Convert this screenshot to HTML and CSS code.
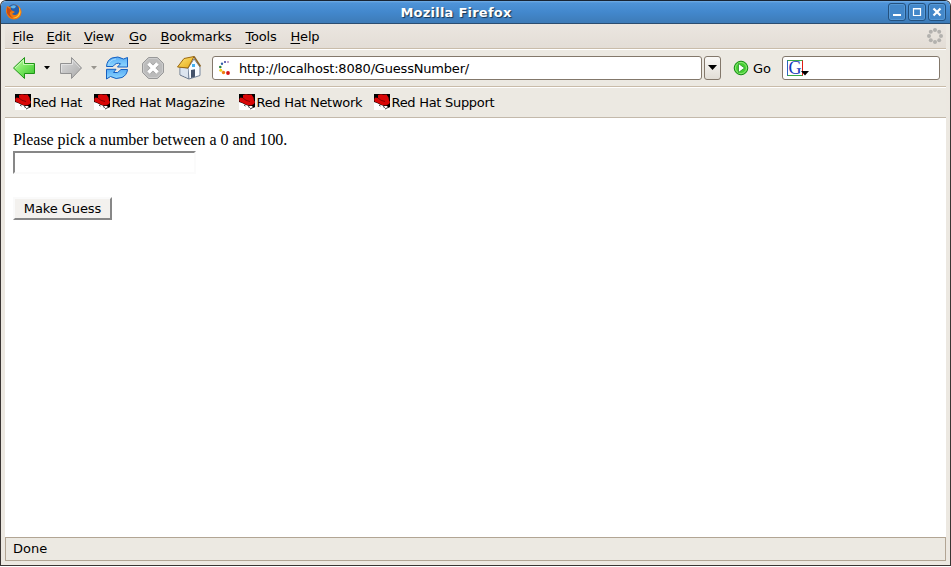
FILE: index.html
```html
<!DOCTYPE html>
<html lang="en">
<head>
<meta charset="utf-8">
<title>Mozilla Firefox</title>
<link rel="stylesheet" href="styles.css">
</head>
<body>
<svg class="defs" width="0" height="0" aria-hidden="true">
  <defs>
    <linearGradient id="green" x1="0" y1="0" x2="1" y2="1"><stop offset="0" stop-color="#c9ffb0"/><stop offset=".5" stop-color="#79e660"/><stop offset="1" stop-color="#35c22a"/></linearGradient>
    <linearGradient id="grey" x1="0" y1="0" x2="1" y2="1"><stop offset="0" stop-color="#dedede"/><stop offset="1" stop-color="#a9a9a9"/></linearGradient>
    <linearGradient id="blue" x1="0" y1="0" x2="0" y2="1"><stop offset="0" stop-color="#58acf5"/><stop offset="1" stop-color="#8fd8ff"/></linearGradient>
    <linearGradient id="roof" x1="0" y1="0" x2="1" y2="1"><stop offset="0" stop-color="#ffe77a"/><stop offset="1" stop-color="#e5a913"/></linearGradient>
    <symbol id="hat" viewBox="0 0 16 16">
      <rect width="16" height="16" fill="#fff"/>
      <path d="M0 0h16v13l-1.500 1-1.500-2-3 0-3-1-4-2-3-1z" fill="#000"/>
      <path d="M4 1l3-.8 2.500.6 3-.3 2 3 .5 3 1 1.500-1 2-3 1.500-4-.5-4-2-3.500-1.500-.3-2.500 1.300-1.500 2.500.5z" fill="#d80606"/>
      <path d="M4 4l3 2.300 4 1.200" fill="none" stroke="#720000" stroke-width=".8"/>
      <path d="M5 11l1.500 1M9 12.500l2 1M11 15l3-1.500" fill="none" stroke="#000" stroke-width=".8"/>
    </symbol>
  </defs>
</svg>
<div class="window">
  <header class="titlebar">
    <svg class="fox" width="18" height="18" viewBox="0 0 18 18">
      <circle cx="9" cy="9" r="7.600" fill="#ef7612"/>
      <circle cx="8.500" cy="7" r="5.800" fill="#245fae"/>
      <path d="M5 4q3-3 6-1l-1 2-2 .5z" fill="#64b7e8"/>
      <path d="M2 3q-2 5 0 8 3 5 8 5 6-1 6-7 0-3-2-5 1 5-1 7-3 2-6 0l3-2-4-2q-1-2 0-3-2 0-4-1z" fill="#ee7812"/>
      <path d="M14 4q3 5 0 9-3 3-6 2 5-1 6-5 1-2 0-6z" fill="#ffcf36"/>
      <path d="M2 4v6q2 4 6 5-4-3-3-6l2-1-2-2z" fill="#c84b13"/>
    </svg>
    <h1>Mozilla Firefox</h1>
    <div class="controls">
      <span><svg width="16" height="16"><path d="M4 11h8" stroke="#fff" stroke-width="2"/></svg></span>
      <span><svg width="16" height="16"><path d="M4.500 4.500h7v7h-7zM4 5h8" fill="none" stroke="#fff" stroke-width="1.200"/></svg></span>
      <span><svg width="16" height="16"><path d="M4.500 4.500l7 7M11.500 4.500l-7 7" stroke="#fff" stroke-width="2.200"/></svg></span>
    </div>
  </header>
  <div class="client">
    <nav class="menubar">
      <a class="m-file"><u>F</u>ile</a><a class="m-edit"><u>E</u>dit</a><a class="m-view"><u>V</u>iew</a><a class="m-go"><u>G</u>o</a><a class="m-book"><u>B</u>ookmarks</a><a class="m-tools"><u>T</u>ools</a><a><u>H</u>elp</a>
      <svg class="throbber" width="18" height="18" viewBox="0 0 18 18" fill="#b3b1ae"><circle cx="9" cy="3" r="2"/><circle cx="13.200" cy="4.800" r="2"/><circle cx="15" cy="9" r="2"/><circle cx="13.200" cy="13.200" r="2"/><circle cx="9" cy="15" r="2"/><circle cx="4.800" cy="13.200" r="2"/><circle cx="3" cy="9" r="2"/><circle cx="4.800" cy="4.800" r="2"/></svg>
    </nav>
    <div class="toolbar">
      <svg class="back" width="24" height="24" viewBox="0 0 24 24"><path d="M1.500 12L12.500 1.500V7.500H22.500V17.500H12.500V22.500z" fill="url(#green)" stroke="#1f9417"/><path d="M3 12l8.500-8v4.500h10" fill="none" stroke="#d8ffc9" opacity=".8"/></svg>
      <svg class="drop" width="6" height="4"><path d="M0 0h6L3 3.500z"/></svg>
      <svg class="forward" width="24" height="24" viewBox="0 0 24 24"><path d="M22.500 12L12.500 1.500V7.500H1.500V17.500H12.500V22.500z" fill="url(#grey)" stroke="#929292"/><path d="M2.500 16V8.500h11V4l7.500 8" fill="none" stroke="#e9e9e9" opacity=".7"/></svg>
      <svg class="drop2" width="6" height="4"><path d="M0 0h6L3 3.500z" fill="#99968f"/></svg>
      <svg class="reload" width="24" height="24" viewBox="0 0 24 24" fill="url(#blue)" stroke="#145fc0" stroke-linejoin="round">
        <path d="M1.500 10.500Q2 4 7 2q6-2.500 11.500 1l4-1.500v9.500h-10l3-3.300Q11 6 8 10.500z"/>
        <path d="M22.500 13.500Q22 19 17 21.500q-6 2.500-11.500-1l-4 2.500v-9.700h9.500l-2.500 3.200Q13 18 16 13.500z"/>
        <path d="M3.500 8.500Q5 3.500 11 3" fill="none" stroke="#a5dcff"/>
      </svg>
      <svg class="stop" width="24" height="24" viewBox="0 0 24 24"><path d="M7.500 1.500h9l6 6v9l-6 6h-9l-6-6v-9z" fill="#bbb" stroke="#989898"/><path d="M8 2.500h8l5.500 5.500v8L16 21.500H8L2.500 16V8z" fill="none" stroke="#ccc"/><path d="M8 8l8 8M16 8l-8 8" stroke="#9c9c9c" stroke-width="5"/><path d="M7.500 7.500l9 9M16.500 7.500l-9 9" stroke="#fff" stroke-width="3.600"/></svg>
      <svg class="home" width="26" height="26" viewBox="0 0 26 26"><path d="M4 12l9 1v11L4 20z" fill="#c8d0db" stroke="#65758b"/><path d="M12 13l6-9 6 8v8.500l-11 3.500z" fill="#f8fbff" stroke="#75859b"/><path d="M4.500 13l7.500 1v9l-7.500-3.500z" fill="#dce5ef"/><path d="M15 15l4-.7v7.500l-4 1.300z" fill="#44536a"/><rect x="16" y="9" width="3" height="3" fill="#45b0ef"/><path d="M1.500 12L8 3.500l10-2L12 13z" fill="url(#roof)" stroke="#9c6910"/><path d="M18 1.500l6.500 10" stroke="#8a6428" stroke-width="1.500"/></svg>
      <div class="address">
        <svg width="14" height="18" viewBox="0 0 14 18"><circle cx="10" cy="3" r=".8" fill="#7a3793"/><circle cx="7" cy="3" r="1.100" fill="#4547a5"/><circle cx="4" cy="4.800" r="1.200" fill="#3360a9"/><circle cx="2.300" cy="8" r="1.300" fill="#28833b"/><circle cx="2.800" cy="11.200" r="1.500" fill="#f1cd17"/><circle cx="5.500" cy="13.500" r="1.700" fill="#ef7b12"/><circle cx="10" cy="14" r="1.900" fill="#d41313"/></svg>
        <span>http://localhost:8080/GuessNumber/</span>
      </div>
      <div class="picker"><svg width="10" height="6"><path d="M0 0h9L4.500 5z"/></svg></div>
      <svg class="go" width="16" height="16" viewBox="0 0 16 16"><circle cx="8" cy="8" r="6.800" fill="#44ce31" stroke="#168b16"/><circle cx="8" cy="8" r="5.500" fill="none" stroke="#8fe978"/><path d="M5.500 3.500l6 4.500-6 4.500z" fill="#fff" stroke="#168b16" stroke-width=".7"/></svg>
      <span class="go-label">Go</span>
      <div class="search"><span class="g">G</span><svg width="8" height="5"><path d="M0 0h8L4 4.500z"/></svg></div>
    </div>
    <nav class="bookmarks">
      <a class="b1"><svg width="16" height="16"><use href="#hat"/></svg>Red Hat</a>
      <a class="b2"><svg width="16" height="16"><use href="#hat"/></svg>Red Hat Magazine</a>
      <a class="b3"><svg width="16" height="16"><use href="#hat"/></svg>Red Hat Network</a>
      <a><svg width="16" height="16"><use href="#hat"/></svg>Red Hat Support</a>
    </nav>
    <main>
      <form>
        <label for="guess">Please pick a number between a 0 and 100.</label>
        <input id="guess" type="text">
        <button type="button">Make Guess</button>
      </form>
    </main>
    <footer>Done</footer>
  </div>
</div>
</body>
</html>
```
FILE: styles.css
```css
* { box-sizing: border-box; }
body { margin: 0; background: #fff; color: #000; font: 13px/17px "DejaVu Sans", sans-serif; overflow: hidden; }
svg { display: block; flex: none; }
.defs { position: absolute; }
.window { width: 951px; height: 566px; border: 1px solid #3a3533; border-top-color: #182434; border-radius: 6px 6px 0 0; background: #ece8e1; display: flex; flex-direction: column; overflow: hidden; }
.titlebar { height: 23px; flex: none; display: flex; align-items: center; background: linear-gradient(#72aee7 0, #4e93d8 2px, #4388cd 50%, #3d7bb7 100%); border-bottom: 1px solid #2b4d70; padding: 0 4px; }
.titlebar h1 { margin: 2px 0 0; padding-left: 40px; padding-right: 39px; flex: 1; text-align: center; font-size: 13px; line-height: 18px; letter-spacing: .24px; color: #fff; text-shadow: 1px 1px 1px #173450; }
.titlebar h1 { padding-left: 21px; }
.controls { display: flex; gap: 2px; width: 58px; margin-left: -19px; }
.controls span { width: 18px; height: 18px; border: 1px solid #24517e; border-radius: 3px; box-shadow: inset 0 0 0 1px #5598d6; background: #4387c9; }
.client { flex: 1; min-height: 0; margin: 0 4px 4px; display: flex; flex-direction: column; }
.menubar { height: 25px; display: flex; align-items: center; padding-left: 7.5px; background: linear-gradient(#ebe6e0, #e3ddd6); border-bottom: 1px solid #c9bcaa; flex: none; }
.menubar a { white-space: nowrap; letter-spacing: -.18px; }
.menubar u { text-decoration-thickness: 1px; text-underline-offset: 2px; }
.m-file { width: 34px; } .m-edit { width: 37.5px; } .m-view { width: 45px; } .m-go { width: 31.5px; } .m-book { width: 85px; } .m-tools { width: 45px; }
.throbber { margin-left: auto; margin-right: 2px; }
.toolbar { height: 38px; flex: none; display: flex; align-items: center; padding-left: 7px; border-top: 1px solid #fff; border-bottom: 1px solid #c9bcaa; background: #ece9e2; }
.drop { margin-left: 8px; } .forward { margin-left: 9px; } .drop2 { margin-left: 8px; } .reload { margin-left: 8px; } .stop { margin-left: 12px; } .home { margin-left: 11px; }
.address { height: 24px; width: 490px; margin-left: 10px; border: 1px solid #83786b; border-radius: 3px; background: #fff; display: flex; align-items: center; padding-left: 5px; }
.address span { margin-left: 7px; letter-spacing: -.19px; }
.picker { width: 17px; height: 24px; margin-left: 2px; border: 1px solid #83786b; border-radius: 3px; background: linear-gradient(#faf9f7, #e1ddd6); display: grid; place-items: center; }
.go { margin-left: 12px; }
.go-label { margin-left: 4px; width: 29px; }
.search { width: 158px; height: 24px; border: 1px solid #83786b; border-radius: 3px; background: #fff; display: flex; align-items: center; padding-left: 4px; }
.g { width: 16px; height: 16px; border: 1px solid; border-color: #38a847 #df1c13 #38a847 #2c64c4; color: #1737bb; font: 18px/14px "Liberation Serif", serif; text-align: center; }
.search svg { margin: 11px 0 0 -2px; }
.bookmarks { height: 31px; flex: none; display: flex; align-items: center; padding-left: 10px; border-top: 1px solid #fff; border-bottom: 1px solid #c3b9ab; background: #ece9e2; }
.bookmarks a { display: flex; white-space: nowrap; gap: 1.5px; letter-spacing: -.29px; }
.b1 { width: 79px; } .b2 { width: 145px; } .b3 { width: 135px; }
main { flex: 1; background: #fff; padding: 12px 8px; }
form { display: flex; flex-direction: column; align-items: flex-start; }
label { font: 16px/20px "Liberation Serif", serif; letter-spacing: -.04px; }
input { width: 183px; height: 23px; margin: 1px 0 23px; padding: 1px; border: 2px solid; border-color: #878787 #fbfbfb #fbfbfb #878787; outline: 0; background: #fff; }
button { width: 99px; height: 23px; padding: 0; border: 2px solid; border-color: #fafafa #878787 #878787 #fafafa; background: #f3f1ee; color: #000; font: 13px/17px "DejaVu Sans", sans-serif; letter-spacing: -.08px; }
footer { height: 24px; flex: none; border: 1px solid #b2a594; background: #ece9e2; padding: 2px 7px; }
```
